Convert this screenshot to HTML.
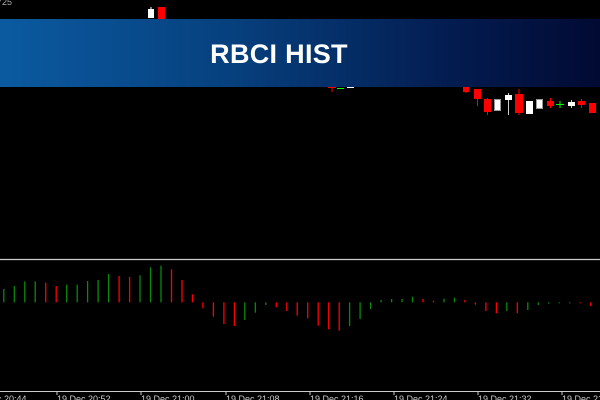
<!DOCTYPE html>
<html><head><meta charset="utf-8"><style>
html,body{margin:0;padding:0;background:#000;width:600px;height:400px;overflow:hidden}
.banner{position:absolute;left:0;top:19px;width:600px;height:68px;background:linear-gradient(90deg,#0b5aa0 0%,#063f7c 40%,#031c50 75%,#010a33 100%);}
.banner span{position:absolute;left:0;width:558px;text-align:center;top:20px;font:bold 27px "Liberation Sans",sans-serif;color:#fff;letter-spacing:0.3px}
</style></head><body>
<svg width="600" height="400" style="position:absolute;left:0;top:0">
<text x="-3" y="5" fill="#aaa" font-family="Liberation Sans" font-size="9">725</text>
<rect x="148" y="9" width="6" height="9" fill="#fff"/>
<line x1="151" y1="7" x2="151" y2="9" stroke="#fff"/>
<rect x="158" y="7" width="7" height="12" fill="#f00"/>
<line x1="332" y1="87" x2="332" y2="92" stroke="#f00"/>
<line x1="328" y1="87.5" x2="336" y2="87.5" stroke="#f00"/>
<line x1="337" y1="88.5" x2="344" y2="88.5" stroke="#0f0"/>
<line x1="347" y1="87.5" x2="354" y2="87.5" stroke="#fff"/>
<line x1="466" y1="87" x2="466" y2="93" stroke="#f00"/><rect x="463" y="87" width="6" height="5" fill="#f00"/>
<line x1="477.5" y1="89" x2="477.5" y2="106" stroke="#f00"/><rect x="474" y="89" width="7" height="10" fill="#f00"/>
<line x1="487.5" y1="98" x2="487.5" y2="115" stroke="#f00"/><rect x="484" y="99" width="7" height="13" fill="#f00"/>
<rect x="494.5" y="99.5" width="6" height="11" fill="#fff" stroke="#999"/>
<line x1="508.5" y1="93" x2="508.5" y2="115" stroke="#ccc"/><rect x="505" y="95" width="7" height="5" fill="#fff"/>
<line x1="519" y1="89" x2="519" y2="115" stroke="#f00"/><rect x="515" y="94" width="8" height="19" fill="#f00"/>
<rect x="526" y="101" width="7" height="13" fill="#fff"/>
<rect x="536.5" y="99.5" width="6" height="9" fill="#fff" stroke="#999"/>
<line x1="550.5" y1="98" x2="550.5" y2="108" stroke="#f00"/><rect x="547" y="101" width="7" height="5" fill="#f00"/>
<line x1="556" y1="104.5" x2="564" y2="104.5" stroke="#0f0"/><line x1="560" y1="101" x2="560" y2="108" stroke="#0f0"/>
<line x1="571.5" y1="100" x2="571.5" y2="108" stroke="#ccc"/><rect x="568" y="102" width="7" height="4" fill="#fff"/>
<line x1="581.5" y1="99" x2="581.5" y2="108" stroke="#f00"/><rect x="578" y="101" width="7" height="4" fill="#f00"/>
<rect x="589" y="103" width="7" height="10" fill="#f00"/>
<line x1="0" y1="259.5" x2="600" y2="259.5" stroke="#ccc" stroke-width="1.2"/>
<g id="hist" stroke-width="1.3"></g>
<line x1="0" y1="391.5" x2="600" y2="391.5" stroke="#ccc"/>
<g stroke="#ccc"><line x1="57" y1="391" x2="57" y2="395"/><line x1="141" y1="391" x2="141" y2="395"/><line x1="226" y1="391" x2="226" y2="395"/><line x1="310" y1="391" x2="310" y2="395"/><line x1="394" y1="391" x2="394" y2="395"/><line x1="478" y1="391" x2="478" y2="395"/><line x1="562" y1="391" x2="562" y2="395"/></g>
<g fill="#ccc" font-family="Liberation Sans" font-size="9">
<text x="-27" y="402">19 Dec 20:44</text>
<text x="57" y="402">19 Dec 20:52</text>
<text x="141" y="402">19 Dec 21:00</text>
<text x="226" y="402">19 Dec 21:08</text>
<text x="310" y="402">19 Dec 21:16</text>
<text x="394" y="402">19 Dec 21:24</text>
<text x="478" y="402">19 Dec 21:32</text>
<text x="562" y="402">19 Dec 21:40</text>
</g>
</svg>
<div class="banner"><span>RBCI HIST</span></div>
<script>
var d=[[117,'g'],[108,'g'],[94,'g'],[94,'g'],[98,'r'],[108,'r'],[104,'g'],[104,'g'],[93,'g'],[90,'g'],[72,'g'],[78,'r'],[81,'r'],[76,'g'],[52,'g'],[47,'g'],[58,'r'],[90,'r'],[133,'r'],[175,'r'],[200,'r'],[222,'r'],[228,'r'],[210,'g'],[188,'g'],[165,'g'],[172,'r'],[183,'r'],[197,'r'],[205,'r'],[227,'r'],[238,'r'],[242,'r'],[228,'g'],[207,'g'],[177,'g'],[150,'g'],[147,'g'],[147,'g'],[140,'g'],[147,'r'],[152,'r'],[146,'g'],[143,'g'],[150,'r'],[164,'r'],[183,'r'],[190,'r'],[183,'g'],[190,'r'],[180,'g'],[165,'g'],[161,'g'],[160,'g'],[160,'g'],[160,'r'],[168,'r']];
var s='';for(var i=0;i<d.length;i++){var x=(3.8+i*10.48).toFixed(1);var y=250+d[i][0]/3;var z=250+157/3;var c=d[i][1]=='g'?'#0a8a0a':'#f00';s+='<line x1="'+x+'" x2="'+x+'" y1="'+Math.min(y,z)+'" y2="'+Math.max(y,z)+'" stroke="'+c+'"/>';}
document.getElementById('hist').innerHTML=s;
</script>
</body></html>
